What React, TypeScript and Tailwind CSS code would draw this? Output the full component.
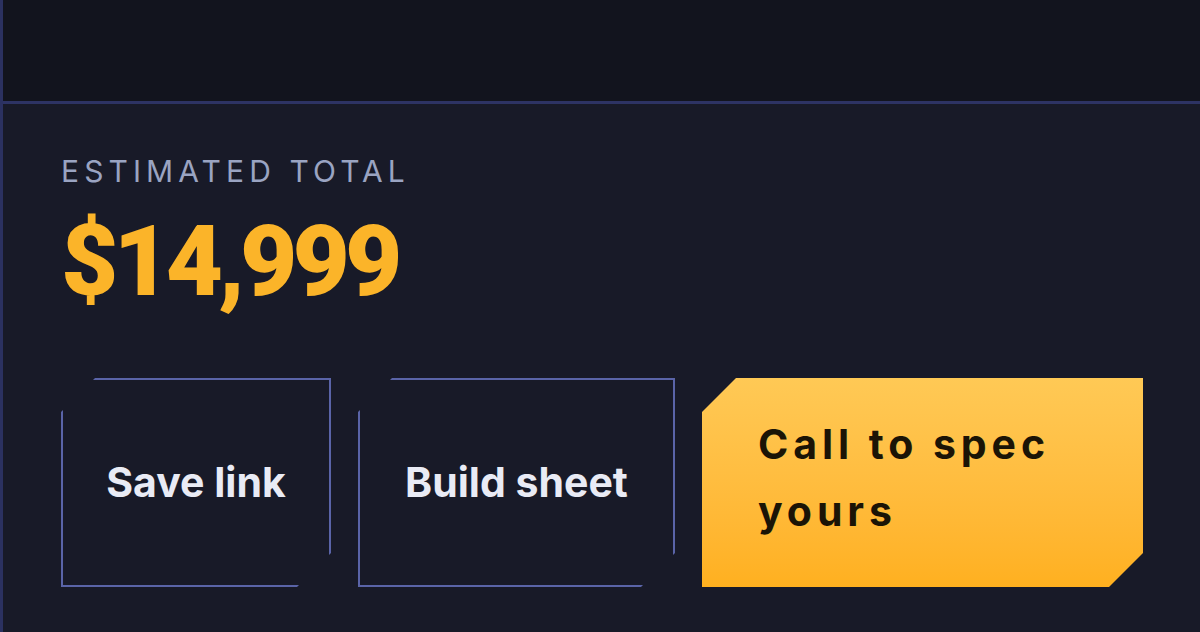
import React from "react";

const cut =
  "[clip-path:polygon(34px_0,100%_0,100%_calc(100%_-_34px),calc(100%_-_34px)_100%,0_100%,0_34px)]";

function OutlineButton({ label, width }: { label: string; width: string }) {
  return (
    <button
      className={`${width} h-[209px] shrink-0 flex items-center justify-center border-2 border-[#5a64a8] bg-transparent text-[#e9ebf5] text-[41px] font-bold leading-none ${cut}`}
    >
      {label}
    </button>
  );
}

export default function App() {
  return (
    <div
      className="w-[1200px] h-[632px] overflow-hidden flex flex-col border-l-[3px] border-[#2b3160] bg-[#181a28]"
      style={{ fontFamily: "Inter, 'Noto Sans', sans-serif" }}
    >
      {/* header strip */}
      <div className="h-[104px] shrink-0 bg-[#12141e] border-b-[3px] border-[#2d3364]" />

      {/* total panel */}
      <div className="flex-1 pl-[58px] pt-[52px]">
        <div className="text-[30px] leading-none font-normal tracking-[0.17em] text-[#9aa4c2]">
          ESTIMATED TOTAL
        </div>
        <div
          className="mt-[26px] text-[99px] leading-none font-black tracking-[-0.05em] text-[#fbb429]"
          style={{ fontFamily: "Roboto, Inter, sans-serif" }}
        >
          $14,999
        </div>

        <div className="mt-[67px] flex gap-[27px]">
          <OutlineButton label="Save link" width="w-[270px]" />
          <OutlineButton label="Build sheet" width="w-[317px]" />
          <button
            className={`w-[441px] h-[209px] shrink-0 flex items-center pl-[56px] pr-[50px] pb-[9px] text-left bg-gradient-to-b from-[#ffc955] to-[#ffb01f] text-[#1b1406] text-[41px] font-bold leading-[67px] tracking-[0.12em] ${cut}`}
          >
            Call to spec yours
          </button>
        </div>
      </div>
    </div>
  );
}
